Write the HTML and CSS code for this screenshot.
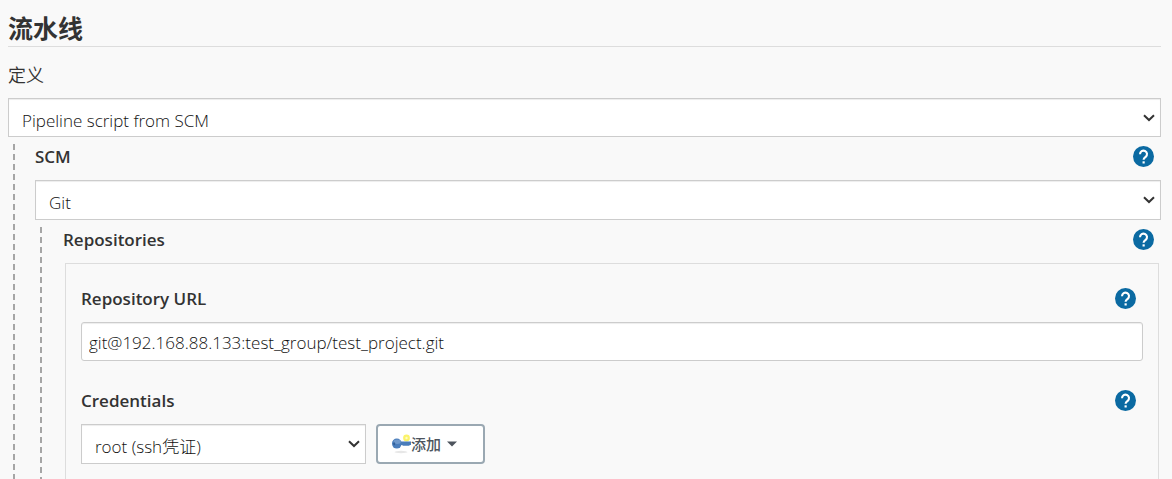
FILE: index.html
```html
<!DOCTYPE html>
<html lang="zh-CN">
<head>
<meta charset="utf-8">
<meta name="viewport" content="width=device-width, initial-scale=1">
<title>流水线</title>
<link rel="stylesheet" href="styles.css">
</head>
<body>
<svg class="sprite" aria-hidden="true">
  <symbol id="help" viewBox="0 0 24 24">
    <circle cx="12" cy="12" r="12" fill="#0b6aa2"/>
    <path d="M8 9.300a4 4 0 1 1 6.500 3.100c-1.500 1.200-2.400 1.700-2.400 3.400" fill="none" stroke="#fff" stroke-width="2.400"/>
    <rect x="10.900" y="17.500" width="2.500" height="2.500" fill="#fff"/>
  </symbol>
  <symbol id="chevron" viewBox="0 0 12 8">
    <path d="M1 1.200 6 6l5-4.800" fill="none" stroke="#333" stroke-width="2"/>
  </symbol>
</svg>
<main class="page">
  <h1 class="section-title">流水线</h1>
  <label class="definition" for="definition">定义</label>
  <div class="select">
    <select id="definition"><option>Pipeline script from SCM</option></select>
    <svg class="chevron" aria-hidden="true"><use href="#chevron"/></svg>
  </div>
  <div class="nested">
    <div class="label-row">
      <label for="scm">SCM</label>
      <button class="help" type="button" aria-label="SCM"><svg><use href="#help"/></svg></button>
    </div>
    <div class="select">
      <select id="scm"><option>Git</option></select>
      <svg class="chevron" aria-hidden="true"><use href="#chevron"/></svg>
    </div>
    <div class="nested">
      <div class="label-row">
        <span id="repositories">Repositories</span>
        <button class="help" type="button" aria-label="Repositories"><svg><use href="#help"/></svg></button>
      </div>
      <section class="repository" aria-labelledby="repositories">
        <div class="label-row">
          <label for="url">Repository URL</label>
          <button class="help" type="button" aria-label="Repository URL"><svg><use href="#help"/></svg></button>
        </div>
        <input class="text-input" id="url" type="text" value="git@192.168.88.133:test_group/test_project.git">
        <div class="label-row spaced">
          <label for="credentials">Credentials</label>
          <button class="help" type="button" aria-label="Credentials"><svg><use href="#help"/></svg></button>
        </div>
        <div class="credentials">
          <div class="select">
            <select id="credentials"><option>root (ssh凭证)</option></select>
            <svg class="chevron" aria-hidden="true"><use href="#chevron"/></svg>
          </div>
          <button class="add" type="button">
            <svg class="key" viewBox="0 0 20 20" aria-hidden="true">
              <ellipse cx="10" cy="18" rx="6.500" ry="1.200" fill="#e7e7e7"/>
              <circle cx="15.500" cy="4" r="3.400" fill="#fbf36a"/>
              <circle cx="15.500" cy="4" r="1.200" fill="#fffbc4"/>
              <path d="M9 7.500h11v3.500h-1.500v.8h-7V11H9z" fill="#4a7dbb"/>
              <ellipse cx="5.800" cy="9.600" rx="4.800" ry="5" fill="#4a7dbb"/>
              <ellipse cx="6.200" cy="7.800" rx="3.600" ry="2.200" fill="#7099cb"/>
              <ellipse cx="3.200" cy="9.800" rx="1" ry="1.500" fill="#315f99"/>
            </svg>
            <span>添加</span>
            <svg class="caret" viewBox="0 0 10 6" aria-hidden="true"><path d="M0 0.500h10L5 5.500z" fill="#4d545d"/></svg>
          </button>
        </div>
      </section>
    </div>
  </div>
</main>
</body>
</html>
```
FILE: styles.css
```css
* {
  box-sizing: border-box;
}

body {
  margin: 0;
  background: #f9f9f9;
  color: #333;
  font-family: "Open Sans", "Noto Sans CJK SC", sans-serif;
  font-size: 17px;
  line-height: 24px;
}

.sprite {
  position: absolute;
  width: 0;
  height: 0;
}

.page {
  display: flex;
  flex-direction: column;
  height: 100vh;
  padding: 11px 11px 0 8px;
  overflow: hidden;
}

.section-title {
  margin: 0 0 16px;
  border-bottom: 1px solid #ddd;
  font-size: 25px;
  line-height: 35px;
  font-weight: 700;
}

.definition {
  margin-bottom: 11px;
  font-size: 18px;
  font-weight: 350;
}

.select {
  position: relative;
  flex: none;
}

.select select {
  display: block;
  width: 100%;
  height: 39px;
  padding: 6px 32px 0 13px;
  appearance: none;
  border: 1px solid #ccc;
  border-radius: 0;
  background: #fff;
  box-shadow: inset 0 1px 1px rgba(0, 0, 0, 0.075);
  color: #111;
  font: inherit;
  font-weight: 300;
}

.nested .select select {
  height: 40px;
}

.chevron {
  position: absolute;
  top: 16px;
  right: 6px;
  width: 12px;
  height: 8px;
  pointer-events: none;
}

.nested {
  display: flex;
  flex: 1 0 auto;
  flex-direction: column;
  margin: 7px 0 0 5px;
  padding-left: 22px;
  background: repeating-linear-gradient(#a6a6a6 0 6px, transparent 6px 10px) left top / 2px 100% no-repeat;
}

.label-row {
  display: flex;
  align-items: center;
  justify-content: space-between;
  height: 24px;
  margin-bottom: 12px;
  padding-right: 7px;
  font-weight: 600;
}

.label-row label,
.label-row span {
  padding-top: 2px;
}

.nested .nested > .label-row {
  padding-left: 1px;
}

.help {
  width: 21px;
  height: 21px;
  padding: 0;
  border: 0;
  background: none;
}

.help svg {
  display: block;
  width: 21px;
  height: 21px;
}

.repository {
  flex: 1 0 auto;
  margin: 0 2px 0 3px;
  padding: 22px 15px 16px;
  border: 1px solid #ddd;
  border-bottom: 0;
}

.text-input {
  display: block;
  width: 100%;
  height: 39px;
  padding: 2px 7px 0;
  border: 1px solid #ccc;
  border-radius: 3px;
  background: #fff;
  box-shadow: inset 0 1px 1px rgba(0, 0, 0, 0.075);
  color: #111;
  font: inherit;
  font-weight: 300;
}

.spaced {
  margin-top: 27px;
}

.credentials {
  display: flex;
  gap: 10px;
}

.credentials .select {
  width: 285px;
}

.add {
  display: flex;
  align-items: center;
  width: 109px;
  height: 40px;
  padding: 0 13px;
  border: 2px solid #9aa8b2;
  border-radius: 4px;
  background: #fff;
  color: #4d545d;
  font: inherit;
  font-size: 15px;
  font-weight: 500;
}

.key {
  width: 20px;
  height: 20px;
}

.caret {
  width: 10px;
  height: 6px;
  margin-left: 6px;
}
```
